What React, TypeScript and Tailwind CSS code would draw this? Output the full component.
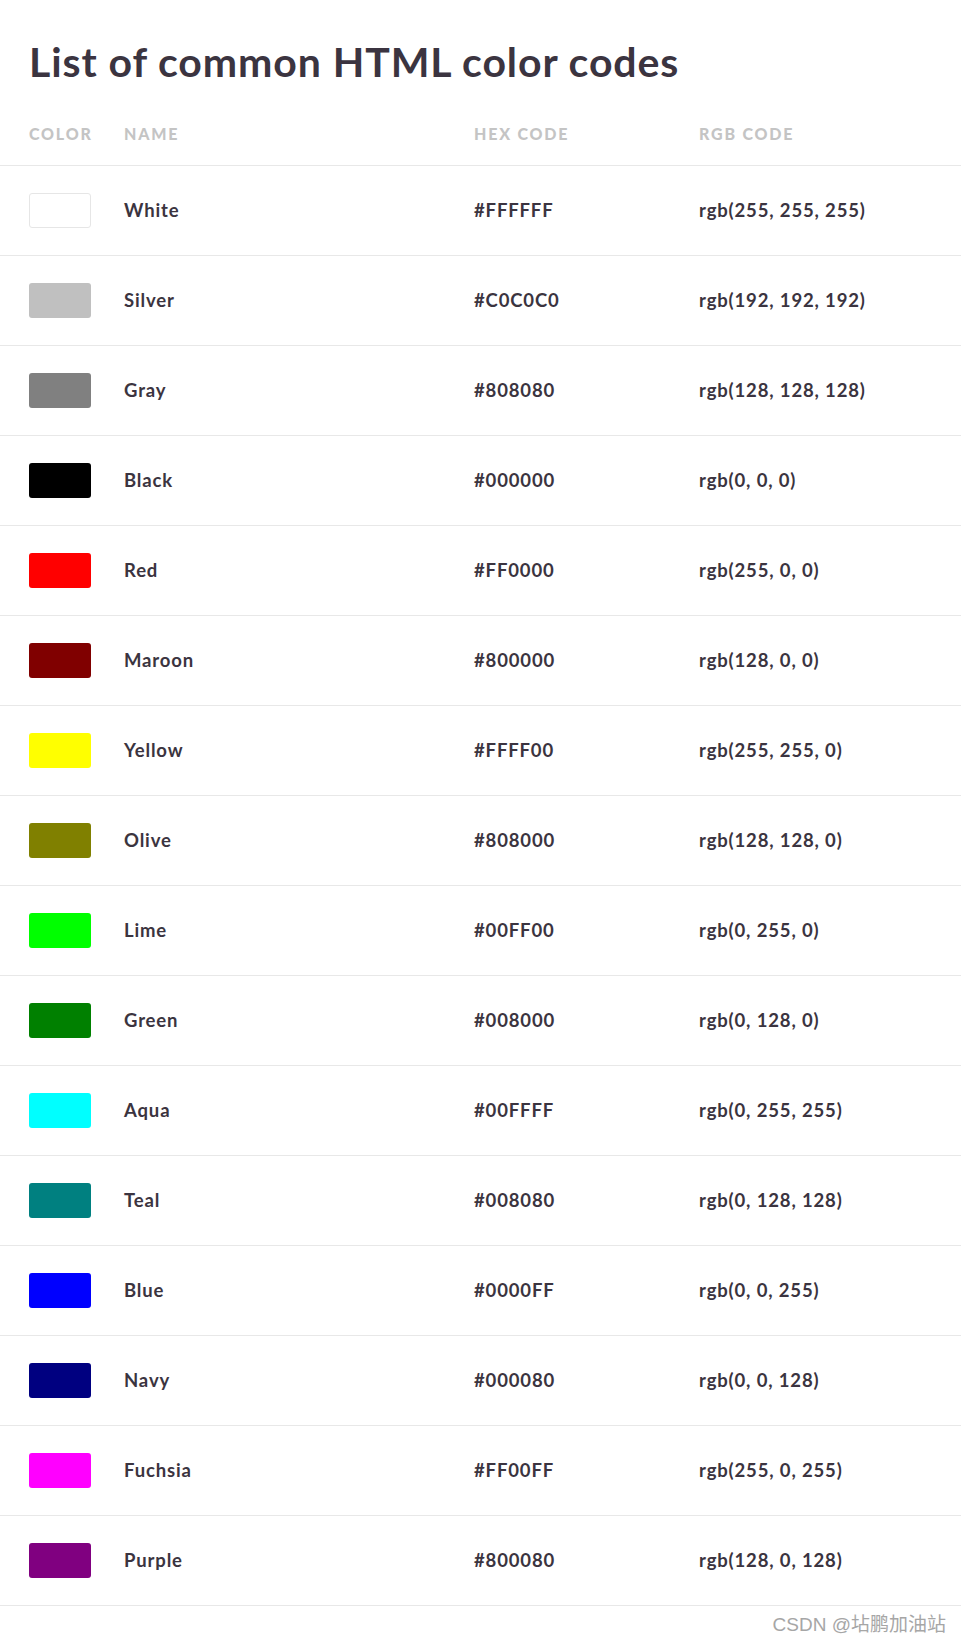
const COLORS: { name: string; hex: string; rgb: string }[] = [
  { name: "White", hex: "#FFFFFF", rgb: "rgb(255, 255, 255)" },
  { name: "Silver", hex: "#C0C0C0", rgb: "rgb(192, 192, 192)" },
  { name: "Gray", hex: "#808080", rgb: "rgb(128, 128, 128)" },
  { name: "Black", hex: "#000000", rgb: "rgb(0, 0, 0)" },
  { name: "Red", hex: "#FF0000", rgb: "rgb(255, 0, 0)" },
  { name: "Maroon", hex: "#800000", rgb: "rgb(128, 0, 0)" },
  { name: "Yellow", hex: "#FFFF00", rgb: "rgb(255, 255, 0)" },
  { name: "Olive", hex: "#808000", rgb: "rgb(128, 128, 0)" },
  { name: "Lime", hex: "#00FF00", rgb: "rgb(0, 255, 0)" },
  { name: "Green", hex: "#008000", rgb: "rgb(0, 128, 0)" },
  { name: "Aqua", hex: "#00FFFF", rgb: "rgb(0, 255, 255)" },
  { name: "Teal", hex: "#008080", rgb: "rgb(0, 128, 128)" },
  { name: "Blue", hex: "#0000FF", rgb: "rgb(0, 0, 255)" },
  { name: "Navy", hex: "#000080", rgb: "rgb(0, 0, 128)" },
  { name: "Fuchsia", hex: "#FF00FF", rgb: "rgb(255, 0, 255)" },
  { name: "Purple", hex: "#800080", rgb: "rgb(128, 0, 128)" },
];

const COLS = "grid grid-cols-[95px_350px_225px_1fr] items-center pl-[29px]";

export default function App() {
  return (
    <div className="min-h-[1643px] w-full bg-white font-['Lato',sans-serif] text-[#3b3440]">
      <div className="flex h-[103px] items-start pl-[29px] pt-[36px]">
        <h1 className="text-[41px] font-bold leading-[52px] tracking-[0.9px]">List of common HTML color codes</h1>
      </div>

      <div className={`${COLS} h-[63px] border-b border-[#e8e8e8] text-[16px] font-black tracking-[1.8px] text-[#c4c4c4]`}>
        <span>COLOR</span>
        <span>NAME</span>
        <span>HEX CODE</span>
        <span>RGB CODE</span>
      </div>

      {COLORS.map((c) => (
        <div key={c.name} className={`${COLS} h-[90px] border-b border-[#e8e8e8] text-[18.5px] font-bold tracking-[0.85px]`}>
          <span
            className={`h-[35px] w-[62px] rounded-[3px] ${c.hex === "#FFFFFF" ? "border border-[#e6e6e6]" : ""}`}
            style={{ backgroundColor: c.hex }}
          />
          <span>{c.name}</span>
          <span>{c.hex}</span>
          <span>{c.rgb}</span>
        </div>
      ))}

      <div className="flex justify-end pr-[15px] pt-[5px] font-['Liberation_Sans','Noto_Sans_CJK_SC',sans-serif] text-[19px] text-[#a6a6a6]">
        CSDN @坫鹏加油站
      </div>
    </div>
  );
}
